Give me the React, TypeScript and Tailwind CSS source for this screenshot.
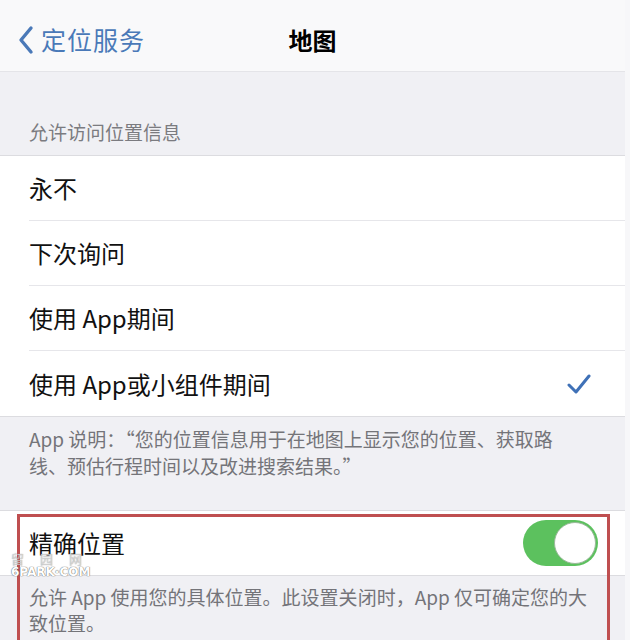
import React from "react";

const rows = ["永不", "下次询问", "使用 App期间", "使用 App或小组件期间"];

export default function App() {
  return (
    <div
      className="w-[630px] h-[640px] overflow-hidden bg-[#f7f7f9]"
      style={{ fontFamily: '"Noto Sans CJK SC", "Noto Sans", sans-serif' }}
    >
      <div className="w-[625px] bg-[#f0f0f4]">
        {/* nav bar */}
        <div className="relative h-[72px] pt-[8px] bg-[#f9f9fa] border-b border-[#e4e4e8] flex items-center">
          <div className="flex items-center pl-[17px] text-[#4a79b8]">
            <svg width="18" height="30" viewBox="0 0 18 30" fill="none">
              <path d="M14 3 L4 15 L14 27" stroke="#4a79b8" strokeWidth="3.4" strokeLinecap="round" strokeLinejoin="round" />
            </svg>
            <span className="ml-[6px] text-[25px] leading-none tracking-[1px]">定位服务</span>
          </div>
          <div className="absolute left-0 right-0 text-center text-[24px] font-bold text-black pointer-events-none">
            地图
          </div>
        </div>

        {/* section header */}
        <div className="pt-[46px] pb-[10px] pl-[29px] text-[19px] leading-[27px] text-[#7b7b80]">
          允许访问位置信息
        </div>

        {/* options */}
        <div className="bg-white border-t border-b border-[#dcdce0]">
          {rows.map((r, i) => (
            <div key={r} className="pl-[29px]">
              <div
                className={
                  "h-[65px] flex items-center justify-between pr-[34px] " +
                  (i < rows.length - 1 ? "border-b border-[#e6e6ea]" : "")
                }
              >
                <span className="text-[24px] text-[#111]">{r}</span>
                {i === rows.length - 1 && (
                  <svg width="24" height="22" viewBox="0 0 24 22" fill="none">
                    <path d="M2 12 L9 19 L22 3" stroke="#3f71b7" strokeWidth="3" strokeLinecap="round" strokeLinejoin="round" />
                  </svg>
                )}
              </div>
            </div>
          ))}
        </div>

        {/* footer note */}
        <div className="pt-[8px] pb-[31px] px-[29px] text-[19px] leading-[27px] text-[#747479]">
          App 说明：“您的位置信息用于在地图上显示您的位置、获取路
          <br />
          线、预估行程时间以及改进搜索结果。”
        </div>

        {/* precise location */}
        <div className="relative">
          <div className="bg-white border-t border-b border-[#dcdce0] h-[66px] flex items-center justify-between pl-[29px] pr-[27px]">
            <span className="text-[24px] text-[#111]">精确位置</span>
            <div className="w-[75px] h-[46px] rounded-full bg-[#5cc15e] flex items-center justify-end pr-[2px]">
              <div className="w-[42px] h-[42px] rounded-full bg-white border border-[#9ab99a]" />
            </div>
          </div>
          <div className="pt-[8px] pb-[20px] pl-[29px] pr-[20px] text-[19px] leading-[26px] text-[#747479]">
            允许 App 使用您的具体位置。此设置关闭时，App 仅可确定您的大致位置。
          </div>
          <div className="absolute left-[17px] top-[4px] w-[593px] h-[200px] border-[3px] border-[#bf4f50] pointer-events-none" />
          <div className="absolute left-[11px] top-[42px] leading-none pointer-events-none">
            <div className="text-[13px] tracking-[16px] text-white/50 [text-shadow:0_0_1px_#888]">留园网</div>
            <div className="mt-[1px] text-[12px] font-bold text-white [text-shadow:0_0_1px_#666,0_0_1px_#666]" style={{ fontFamily: '"DejaVu Sans", sans-serif' }}>
              6PARK·COM
            </div>
          </div>
        </div>
      </div>
    </div>
  );
}
